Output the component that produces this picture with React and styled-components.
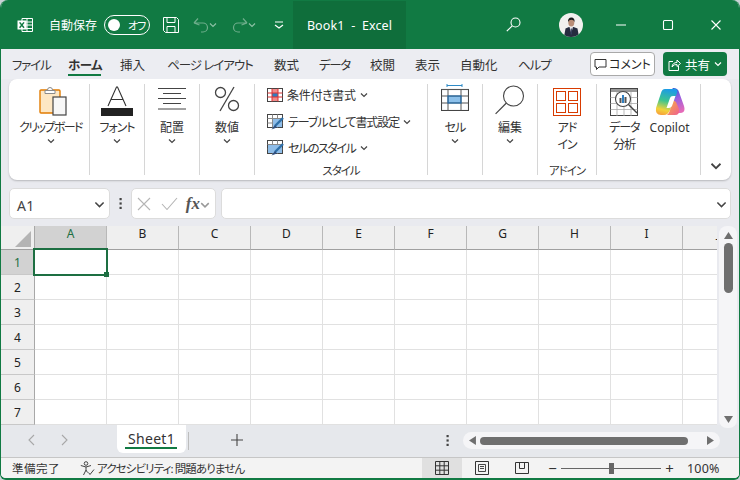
import React from "react";
import styled, { createGlobalStyle } from "styled-components";

const GREEN = "#117a43";
const FONT = `"Noto Sans", "Noto Sans CJK JP", sans-serif`;

const GlobalStyle = createGlobalStyle`
  html, body {
    margin: 0;
    padding: 0;
    background: #c9d3d6;
  }
  * {
    box-sizing: border-box;
  }
`;

const Window = styled.div`
  width: 740px;
  height: 480px;
  display: flex;
  flex-direction: column;
  overflow: hidden;
  background: #e9eaef;
  border: solid ${GREEN};
  border-width: 0 1px 2px 1px;
  border-radius: 8px 8px 6px 6px;
  font-family: ${FONT};
  font-feature-settings: "palt";
  color: #262626;
`;

/* title bar */
const TitleBar = styled.div`
  height: 49px;
  flex: none;
  display: flex;
  align-items: center;
  background: ${GREEN};
  color: #fff;
  font-size: 12px;
  margin: 0 -1px;
`;

const TitleIcon = styled.svg`
  flex: none;
  display: block;
  margin-left: ${(p) => p.$left || 0}px;
`;

const AutoSaveLabel = styled.span`
  margin-left: 16px;
  width: 48px;
  flex: none;
  white-space: nowrap;
`;

const Toggle = styled.div`
  width: 46px;
  height: 20px;
  flex: none;
  margin-left: 7px;
  border: 1.5px solid #fff;
  border-radius: 10px;
  display: flex;
  align-items: center;
  padding-left: 3px;
  gap: 8px;
  font-size: 11px;
  letter-spacing: -1px;
  white-space: nowrap;
`;

const ToggleKnob = styled.div`
  width: 12px;
  height: 12px;
  flex: none;
  border-radius: 50%;
  background: #fff;
`;

const DocTab = styled.div`
  width: 113px;
  height: 48px;
  flex: none;
  margin: 1px 0 0 9px;
  background: #0f6e3b;
  display: flex;
  align-items: center;
  justify-content: center;
  font-size: 12.5px;
  white-space: pre;
  letter-spacing: 0.1px;
`;

/* ribbon tabs */
const TabRow = styled.div`
  height: 30px;
  flex: none;
  display: flex;
  align-items: center;
  padding-left: 11px;
  background: #ecedf2;
  position: relative;
`;

const TabLabel = styled.div`
  width: ${(p) => p.$width}px;
  flex: none;
  height: 30px;
  line-height: 33px;
  font-size: 12.5px;
  white-space: nowrap;
  position: relative;
  font-weight: ${(p) => (p.$active ? 700 : 400)};
  letter-spacing: ${(p) => p.$spacing || 0}px;
  color: #333;
  &::after {
    content: "";
    display: ${(p) => (p.$active ? "block" : "none")};
    position: absolute;
    left: 0;
    top: 25px;
    width: 33px;
    height: 2px;
    background: ${GREEN};
  }
`;

const CommentButton = styled.div`
  width: 65px;
  height: 24px;
  flex: none;
  margin-left: 39px;
  display: flex;
  align-items: center;
  justify-content: center;
  gap: 2px;
  background: #fff;
  border: 1px solid #a9a9a9;
  border-radius: 4px;
  font-size: 12px;
  white-space: nowrap;
`;

const ShareButton = styled.div`
  width: 64px;
  height: 24px;
  flex: none;
  margin-left: 8px;
  display: flex;
  align-items: center;
  justify-content: center;
  gap: 4px;
  background: ${GREEN};
  color: #fff;
  border-radius: 4px;
  font-size: 12.5px;
  white-space: nowrap;
`;

/* ribbon card */
const Ribbon = styled.div`
  height: 101px;
  margin: 0 8px;
  flex: none;
  display: flex;
  padding: 5px 0 5px;
  background: #fff;
  border-radius: 8px;
  box-shadow: 0 1px 2px rgba(0, 0, 0, 0.22);
`;

const Group = styled.div`
  width: ${(p) => p.$width}px;
  flex: none;
  display: flex;
  flex-direction: column;
  align-items: ${(p) => p.$align || "center"};
  padding-left: ${(p) => p.$indent || 0}px;
  border-right: ${(p) => (p.$last ? "none" : "1px solid #d6d6d6")};
  position: relative;
`;

const IconSlot = styled.div`
  height: 32px;
  display: flex;
  align-items: flex-end;
  justify-content: center;
  padding-bottom: ${(p) => p.$lift || 0}px;
  padding-left: ${(p) => p.$shift || 0}px;
`;

const BigLabel = styled.div`
  margin-top: 3px;
  font-size: 12px;
  line-height: 17px;
  text-align: center;
  white-space: pre;
  letter-spacing: ${(p) => p.$spacing || 0}px;
  color: #333;
`;

const Chevron = styled.svg`
  display: block;
  flex: none;
  margin-top: ${(p) => p.$top || 0}px;
`;

const GroupName = styled.div`
  position: absolute;
  left: 0;
  right: 0;
  bottom: -3px;
  text-align: center;
  font-size: 11.5px;
  line-height: 15px;
  letter-spacing: -1px;
  color: #333;
`;

const ButtonPair = styled.div`
  display: flex;
  gap: 10px;
  padding-left: 12px;
  width: 100%;
`;

const PairColumn = styled.div`
  display: flex;
  flex-direction: column;
  align-items: center;
  flex: none;
`;

const StyleList = styled.div`
  display: flex;
  flex-direction: column;
  margin-top: -2px;
  padding: 0 0 0 12px;
  width: 100%;
`;

const StyleRow = styled.div`
  height: 26.5px;
  display: flex;
  align-items: center;
  gap: 4px;
  font-size: 12px;
  white-space: nowrap;
  color: #333;
`;

const StyleText = styled.span`
  letter-spacing: ${(p) => p.$spacing || 0}px;
`;

const CollapseSlot = styled.div`
  position: absolute;
  right: 9px;
  bottom: 3px;
`;

/* formula bar */
const FormulaBar = styled.div`
  height: 31px;
  flex: none;
  margin: 8px 8px 7px;
  display: flex;
  align-items: stretch;
`;

const FieldBox = styled.div`
  width: ${(p) => (p.$grow ? "auto" : `${p.$width}px`)};
  flex: ${(p) => (p.$grow ? 1 : "none")};
  display: flex;
  align-items: center;
  justify-content: ${(p) => p.$justify || "flex-start"};
  margin-left: ${(p) => p.$left || 0}px;
  background: #fff;
  border: 1px solid #dcdcdc;
  border-radius: 5px;
  padding: 1px ${(p) => p.$pad ?? 4}px 0;
`;

const NameText = styled.span`
  font-size: 14px;
  color: #444;
  margin-left: 3px;
  padding-top: 2px;
  letter-spacing: 0.4px;
  flex: 1;
`;

const DotsSlot = styled.div`
  width: 21px;
  flex: none;
  display: flex;
  align-items: center;
  justify-content: center;
`;

const FxText = styled.span`
  font-family: "Liberation Serif", serif;
  font-style: italic;
  font-weight: 700;
  font-size: 17px;
  color: #555;
  margin-left: 8px;
`;

/* sheet grid */
const GridArea = styled.div`
  flex: none;
  height: 199px;
  display: flex;
`;

const SheetGrid = styled.div`
  width: 716px;
  flex: none;
  position: relative;
  overflow: hidden;
  display: grid;
  grid-template-columns: 34px repeat(10, 72px);
  grid-template-rows: 24px repeat(7, 25px);
  background: #fff;
`;

const Corner = styled.div`
  background: #efefef;
  border-right: 1px solid #a8a8a8;
  border-bottom: 1px solid #a0a0a0;
  display: flex;
  align-items: flex-end;
  justify-content: flex-end;
  padding: 0 3px 2px 0;
`;

const ColHead = styled.div`
  background: ${(p) => (p.$selected ? "#d2d2d2" : "#efefef")};
  color: ${(p) => (p.$selected ? "#1d6f42" : "#222")};
  border-right: 1px solid #b8b8b8;
  border-bottom: 1px solid #a0a0a0;
  font-size: 12px;
  line-height: 15px;
  text-align: center;
`;

const RowHead = styled.div`
  background: ${(p) => (p.$selected ? "#d2d2d2" : "#efefef")};
  color: ${(p) => (p.$selected ? "#1d6f42" : "#222")};
  border-right: 1px solid #a8a8a8;
  border-bottom: 1px solid #c8c8c8;
  font-size: 12px;
  line-height: 26px;
  text-align: center;
`;

const Cell = styled.div`
  border-right: 1px solid #e1e1e1;
  border-bottom: 1px solid #e1e1e1;
`;

const Selection = styled.div`
  position: absolute;
  left: 32px;
  top: 22px;
  width: 75px;
  height: 28px;
  border: 2px solid #1d6f42;
  &::after {
    content: "";
    position: absolute;
    right: -3px;
    bottom: -3px;
    width: 5px;
    height: 5px;
    background: #1d6f42;
  }
`;

const VScroll = styled.div`
  width: 18px;
  flex: none;
  margin: 0 0 -3px 2px;
  display: flex;
  flex-direction: column;
  align-items: center;
  background: #f5f5f7;
  border-radius: 8px;
  padding: 5px 0 4px;
  position: relative;
`;

const VThumb = styled.div`
  width: 9px;
  height: 50px;
  margin-top: 3px;
  border-radius: 5px;
  background: #6f6f6f;
`;

const Spacer = styled.div`
  flex: 1;
`;

/* sheet tabs */
const SheetBar = styled.div`
  height: 33px;
  flex: none;
  display: flex;
  align-items: flex-start;
  background: #e6e8ec;
  border-bottom: 1px solid #c6c6c6;
`;

const NavArrows = styled.div`
  width: 116px;
  height: 30px;
  flex: none;
  display: flex;
  align-items: center;
  gap: 24px;
  padding-left: 26px;
`;

const SheetTab = styled.div`
  width: 69px;
  height: 28px;
  flex: none;
  background: #fff;
  border-radius: 0 0 6px 6px;
  position: relative;
  font-size: 14px;
  line-height: 27px;
  text-align: center;
  letter-spacing: 0.3px;
  color: #333;
  &::after {
    content: "";
    position: absolute;
    left: 8px;
    right: 9px;
    bottom: 4px;
    height: 2px;
    background: ${GREEN};
  }
`;

const TabDivider = styled.div`
  width: 1px;
  height: 18px;
  flex: none;
  margin: 7px 0 0 2px;
  background: #bdbdbd;
`;

const AddSheet = styled.div`
  width: 95px;
  height: 30px;
  flex: none;
  display: flex;
  align-items: center;
  justify-content: center;
`;

const BarDots = styled.div`
  width: 179px;
  height: 30px;
  flex: none;
  display: flex;
  align-items: center;
  justify-content: flex-end;
  padding-right: 14px;
`;

const HScroll = styled.div`
  width: 257px;
  height: 17px;
  flex: none;
  margin-top: 7px;
  display: flex;
  align-items: center;
  padding: 0 5px;
  background: #f5f5f7;
  border-radius: 9px;
`;

const HThumb = styled.div`
  width: 209px;
  height: 8px;
  margin-left: 3px;
  margin-right: 18px;
  border-radius: 4px;
  background: #6f6f6f;
`;

/* status bar */
const StatusBar = styled.div`
  flex: 1;
  display: flex;
  align-items: stretch;
  background: #f3f3f3;
  font-size: 11.5px;
  color: #333;
  white-space: nowrap;
`;

const StatusText = styled.div`
  display: flex;
  flex: none;
  align-items: center;
  gap: 2px;
  margin-left: ${(p) => p.$left}px;
  width: ${(p) => p.$width}px;
  letter-spacing: ${(p) => p.$spacing || 0}px;
`;

const ViewButton = styled.div`
  width: 40px;
  flex: none;
  display: flex;
  align-items: center;
  justify-content: center;
  background: ${(p) => (p.$active ? "#e0e0e0" : "transparent")};
`;

const ZoomBox = styled.div`
  display: flex;
  flex: none;
  align-items: center;
  margin-left: 6px;
  gap: 4px;
`;

const ZoomSign = styled.span`
  width: 9px;
  text-align: center;
  font-size: 15px;
  line-height: 15px;
`;

const ZoomTrack = styled.div`
  width: 100px;
  height: 1px;
  background: #666;
  position: relative;
`;

const ZoomHandle = styled.div`
  position: absolute;
  left: 48px;
  top: -5px;
  width: 5px;
  height: 11px;
  background: #666;
`;

const ZoomValue = styled.div`
  display: flex;
  flex: none;
  align-items: center;
  margin-left: 13px;
  font-size: 12.5px;
  letter-spacing: 0.2px;
`;

/* drawings */
const ChevronDown = ({ size = 8, color = "#444", top, width = 1.2 }) => (
  <Chevron $top={top} width={size} height={size} viewBox="0 0 8 8">
    <path d="M1 2.5 L4 5.5 L7 2.5" fill="none" stroke={color} strokeWidth={width} />
  </Chevron>
);

const ExcelGlyph = () => (
  <TitleIcon $left={17} width="16" height="16" viewBox="0 0 16 16">
    <path d="M5 1.5h10.5v13H5z M5 5h10.5 M5 8h10.5 M5 11.5h10.5 M10 1.5v13" fill="none" stroke="#fff" strokeWidth="1" />
    <rect x="0.5" y="3.5" width="9" height="9" fill="#fff" />
    <path d="M2.6 5.4 L7 10.8 M7 5.4 L2.6 10.8" stroke={GREEN} strokeWidth="1.5" />
  </TitleIcon>
);

const SaveGlyph = () => (
  <TitleIcon $left={13} width="16" height="16" viewBox="0 0 16 16">
    <path d="M.5 .5h13l2 2v13h-13l-2-2z M4 .5v5h8v-5 M4 15.5v-6h8v6" fill="none" stroke="#fff" strokeWidth="1" />
  </TitleIcon>
);

const UndoGlyph = ({ flip, left }) => (
  <TitleIcon $left={left} width="16" height="16" viewBox="0 0 16 16" style={flip ? { transform: "scaleX(-1)" } : undefined}>
    <path d="M1 6 L5 1.5 M1 6 L6.5 8 M1 6 H10 A4.5 4.5 0 0 1 10 15 H8" fill="none" stroke="#6fae8c" strokeWidth="1.2" />
  </TitleIcon>
);

const CustomizeGlyph = () => (
  <TitleIcon $left={18} width="10" height="10" viewBox="0 0 10 10">
    <path d="M1 2h8M1 5l4 3 4-3" fill="none" stroke="#fff" strokeWidth="1.2" />
  </TitleIcon>
);

const SearchGlyph = () => (
  <TitleIcon $left={100} width="15" height="15" viewBox="0 0 15 15">
    <circle cx="9.5" cy="5.5" r="4.5" fill="none" stroke="#fff" strokeWidth="1.1" />
    <path d="M6.2 8.8 L.8 14.2" stroke="#fff" strokeWidth="1.2" />
  </TitleIcon>
);

const AvatarGlyph = () => (
  <TitleIcon $left={38} width="24" height="24" viewBox="0 0 24 24">
    <defs>
      <clipPath id="avatarClip">
        <circle cx="12" cy="12" r="12" />
      </clipPath>
    </defs>
    <g clipPath="url(#avatarClip)">
      <rect width="24" height="24" fill="#f2f1ef" />
      <path d="M5 24 L6.5 15.5 L10 14 L14.5 14 L18.5 15.5 L20 24z" fill="#262c3f" />
      <path d="M10.5 14 L12.2 20 L14 14z" fill="#e8e8ec" />
      <path d="M11.8 15.5 h1 l.4 6 h-1.8z" fill="#343c5a" />
      <ellipse cx="12.3" cy="9.5" rx="3" ry="4" fill="#b98d76" />
      <path d="M9 9 Q8.8 4.4 12.4 4.4 Q15.8 4.4 15.6 9 Q14.8 6.8 12.4 6.8 Q10 6.8 9 9z" fill="#1b1b1d" />
    </g>
  </TitleIcon>
);

const WindowGlyph = ({ kind, left }) => (
  <TitleIcon $left={left} width="12" height="12" viewBox="0 0 12 12">
    {kind === "min" && <path d="M1 6h10" stroke="#fff" strokeWidth="1.2" />}
    {kind === "max" && <rect x="1.5" y="1.5" width="9" height="9" rx="1" fill="none" stroke="#fff" strokeWidth="1.1" />}
    {kind === "close" && <path d="M1.5 1.5 L10.5 10.5 M10.5 1.5 L1.5 10.5" stroke="#fff" strokeWidth="1.1" />}
  </TitleIcon>
);

const ClipboardIcon = () => (
  <svg width="28" height="30" viewBox="0 0 28 30">
    <rect x="1" y="4" width="20" height="23" rx="1" fill="#fde7c4" stroke="#e17b00" strokeWidth="1.4" />
    <path d="M6 4.5 h10 v3 h-10z M8.5 4 a2.5 2.5 0 0 1 5 0" fill="#fff" stroke="#8a8a8a" strokeWidth="1" />
    <rect x="14" y="11" width="13" height="18" fill="#f7f7f7" stroke="#444" strokeWidth="1.2" />
  </svg>
);

const FontIcon = () => (
  <svg width="32" height="30" viewBox="0 0 32 30">
    <path d="M7 20 L15.5 1 h1 L25 20 M10 13.5 h12" fill="none" stroke="#333" strokeWidth="1.1" />
    <rect y="22" width="32" height="8" fill="#222" />
  </svg>
);

const AlignIcon = () => (
  <svg width="28" height="22" viewBox="0 0 28 22">
    <path d="M0 .5h28 M5 5.500h18 M0 10.500h28 M5 15.500h18 M0 21h28" stroke="#444" strokeWidth="1" />
  </svg>
);

const PercentIcon = () => (
  <svg width="26" height="26" viewBox="0 0 26 26">
    <circle cx="6.5" cy="6.5" r="5" fill="none" stroke="#444" strokeWidth="1.3" />
    <circle cx="19.5" cy="19.5" r="5" fill="none" stroke="#444" strokeWidth="1.3" />
    <path d="M20 1 L6 25" stroke="#444" strokeWidth="1.3" />
  </svg>
);

const CondFormatIcon = () => (
  <svg width="16" height="14" viewBox="0 0 16 14">
    <rect x=".5" y=".5" width="15" height="13" fill="#fff" stroke="#444" />
    <rect x="5" y="1" width="6" height="4" fill="#f08a8a" />
    <rect x="5" y="9" width="6" height="4" fill="#f08a8a" />
    <rect x="5" y="5" width="6" height="4" fill="#2f7fc1" />
    <path d="M5 .5v13 M11 .5v13 M.5 5h15 M.5 9h15" stroke="#d33" strokeWidth="1" />
  </svg>
);

const TableFormatIcon = ({ shade }) => (
  <svg width="17" height="16" viewBox="0 0 17 16">
    <rect x=".5" y=".5" width="15" height="13" fill="#fff" stroke="#444" />
    <path d="M5.5 .5v13 M10.5 .5v13 M.5 4.5h15 M.5 9h15" stroke="#888" />
    <rect x={shade ? 1 : 6} y="5" width={shade ? 14 : 9} height="8" fill="#8fbde8" />
    <path d="M16 4 L8 12" stroke="#2f6fa8" strokeWidth="2.4" />
    <path d="M8 11 L4.5 15.5 L10 13.5z" fill="#2f4f7f" />
  </svg>
);

const CellsIcon = () => (
  <svg width="28" height="27" viewBox="0 0 28 27">
    <path d="M6 1.5h15 M6 0v3 M21 0v3" stroke="#2f8ac6" strokeWidth="1" />
    <rect x="7" y="12" width="13" height="7" fill="#8cc0ea" />
    <rect x=".5" y="5.5" width="27" height="21" fill="none" stroke="#444" strokeWidth="1.1" />
    <path d="M.5 5.5h27 M.5 12h27 M.5 19h27 M7 5.5v21 M20 5.5v21" stroke="#555" strokeWidth="1" />
    <rect x="7" y="12" width="13" height="7" fill="none" stroke="#1e6db0" strokeWidth="1.1" />
  </svg>
);

const EditSearchIcon = () => (
  <svg width="30" height="30" viewBox="0 0 30 30">
    <circle cx="18.5" cy="11" r="10" fill="none" stroke="#444" strokeWidth="1.1" />
    <path d="M11.4 18 L.6 28.8" stroke="#444" strokeWidth="1.2" />
  </svg>
);

const AddinIcon = () => (
  <svg width="28" height="28" viewBox="0 0 28 28">
    <rect x=".5" y=".5" width="27" height="27" fill="#fff" stroke="#d83b01" />
    <rect x="3.5" y="3.5" width="9" height="9" fill="none" stroke="#d83b01" />
    <rect x="15.5" y="3.5" width="9" height="9" fill="none" stroke="#d83b01" />
    <rect x="3.5" y="15.5" width="9" height="9" fill="none" stroke="#d83b01" />
    <rect x="15.5" y="15.5" width="9" height="9" fill="none" stroke="#d83b01" />
  </svg>
);

const AnalyzeIcon = () => (
  <svg width="28" height="28" viewBox="0 0 28 28">
    <rect x=".5" y=".5" width="27" height="27" fill="#fff" stroke="#444" />
    <rect x="1" y="1" width="26" height="3" fill="#999" />
    <path d="M.5 9.5h27 M.5 15.5h27 M.5 21.5h27 M7 4v24 M14 4v24 M21 4v24" stroke="#aaa" strokeWidth=".8" />
    <circle cx="13" cy="11" r="7.5" fill="#fff" stroke="#444" strokeWidth="1.1" />
    <path d="M18.5 16.5 L27 25" stroke="#444" strokeWidth="1.4" />
    <rect x="9.5" y="10" width="2" height="5" fill="#555" />
    <rect x="12" y="7" width="2" height="8" fill="#2f7fc1" />
    <rect x="14.5" y="9" width="2" height="6" fill="#555" />
  </svg>
);

const CopilotIcon = () => (
  <svg width="30" height="28" viewBox="0 0 30 28">
    <defs>
      <linearGradient id="copilotLeft" x1="0.5" y1="0" x2="0.3" y2="1">
        <stop offset="0" stopColor="#1c9be6" />
        <stop offset="0.45" stopColor="#3cc58f" />
        <stop offset="0.8" stopColor="#f2d33a" />
        <stop offset="1" stopColor="#f7a23b" />
      </linearGradient>
      <linearGradient id="copilotRight" x1="0.3" y1="0" x2="0.6" y2="1">
        <stop offset="0" stopColor="#1f5fd6" />
        <stop offset="0.45" stopColor="#9a5fe0" />
        <stop offset="1" stopColor="#e56ab8" />
      </linearGradient>
      <linearGradient id="copilotBottom" x1="0" y1="0" x2="1" y2="1">
        <stop offset="0" stopColor="#f9b43d" />
        <stop offset="1" stopColor="#ee5f8f" />
      </linearGradient>
    </defs>
    <path d="M18 0 Q23 0 24 4 L29 18 Q31 25 25 25 H20 L13 6z" fill="url(#copilotRight)" />
    <path d="M10 1 H20 Q23 1 22 5 L15 22 Q13 27 9 27 H6 Q0 27 1 20 L6 5 Q7 1 10 1z" fill="url(#copilotLeft)" />
    <path d="M12 27 H20 Q25 27 24 21 L21 14 L18 12 L15 22 Q14 26 12 27z" fill="url(#copilotBottom)" />
    <path d="M15 10 Q15.500 8 18 8 H20.500 L17 18 Q16 20 14 20 H11.500z" fill="#fff" />
  </svg>
);

const CommentGlyph = () => (
  <svg width="13" height="13" viewBox="0 0 13 13">
    <path d="M1 1.5h11v7.5h-7l-2.5 2.5v-2.5h-1.500z" fill="none" stroke="#333" strokeWidth="1" />
  </svg>
);

const ShareGlyph = () => (
  <svg width="13" height="13" viewBox="0 0 13 13">
    <path d="M5 3.5H1v9h9.500V8 M4 9 Q4.500 4.500 9 4.500 V2 L12.500 5.500 L9 8.500 V6.500 Q6 6 4 9z" fill="none" stroke="#fff" strokeWidth="1" />
  </svg>
);

const CornerTriangle = () => (
  <svg width="16" height="16" viewBox="0 0 16 16">
    <path d="M16 0V16H0z" fill="#b4b4b4" />
  </svg>
);

const TriangleIcon = ({ dir, size = 9 }) => {
  const paths = {
    up: "M4.500 1 L9 8 H0z",
    down: "M0 1 H9 L4.500 8z",
    left: "M8 0 V9 L1 4.500z",
    right: "M1 0 V9 L8 4.500z",
  };
  return (
    <svg width={size} height={size} viewBox="0 0 9 9">
      <path d={paths[dir]} fill="#6f6f6f" />
    </svg>
  );
};

const NavIcon = ({ flip }) => (
  <svg width="9" height="12" viewBox="0 0 9 12" style={flip ? { transform: "scaleX(-1)" } : undefined}>
    <path d="M7 1 L2 6 L7 11" fill="none" stroke="#a8a8a8" strokeWidth="1.1" />
  </svg>
);

const PlusIcon = () => (
  <svg width="12" height="12" viewBox="0 0 12 12">
    <path d="M6 0v12M0 6h12" stroke="#444" strokeWidth="1.1" />
  </svg>
);

const DotsIcon = () => (
  <svg width="3" height="11" viewBox="0 0 3 11">
    <rect x=".5" width="2.200" height="2.200" fill="#444" />
    <rect x=".5" y="4.400" width="2.200" height="2.200" fill="#444" />
    <rect x=".5" y="8.800" width="2.200" height="2.200" fill="#444" />
  </svg>
);

const CancelIcon = () => (
  <svg width="14" height="14" viewBox="0 0 14 14">
    <path d="M1 1 L13 13 M13 1 L1 13" stroke="#b5b5b5" strokeWidth="1.1" />
  </svg>
);

const ConfirmIcon = () => (
  <svg width="17" height="14" viewBox="0 0 17 14">
    <path d="M1 7 L6 12.500 L16 1" fill="none" stroke="#b5b5b5" strokeWidth="1.1" />
  </svg>
);

const AccessIcon = () => (
  <svg width="15" height="15" viewBox="0 0 15 15">
    <circle cx="6" cy="2.500" r="1.800" fill="none" stroke="#444" strokeWidth="1" />
    <path d="M.8 4.500 L6 6 L11 4.500 M6 6 V9 L3.500 14 M6 9 L7.500 11.500 M8.500 11.500 L10 13.500 L14 8.500" fill="none" stroke="#444" strokeWidth="1" />
  </svg>
);

const NormalViewIcon = () => (
  <svg width="14" height="14" viewBox="0 0 14 14">
    <path d="M.5 .5h13v13h-13z M.5 4.800h13 M.5 9.200h13 M4.800 .5v13 M9.200 .5v13" fill="none" stroke="#333" strokeWidth="1" />
  </svg>
);

const PageViewIcon = () => (
  <svg width="14" height="14" viewBox="0 0 14 14">
    <path d="M.5 .5h13v13h-13z" fill="none" stroke="#333" />
    <path d="M3.500 3.500h7v7h-7z M5 5.500h4 M5 7.500h4" fill="none" stroke="#333" strokeWidth=".9" />
  </svg>
);

const BreakViewIcon = () => (
  <svg width="14" height="12" viewBox="0 0 14 12">
    <path d="M.5 .5h13v11h-13z M4.500 .5v6h5v-6" fill="none" stroke="#333" />
  </svg>
);

const tabs = [
  { label: "ファイル", width: 56, spacing: -1.2 },
  { label: "ホーム", width: 52, active: true, spacing: -0.6 },
  { label: "挿入", width: 47 },
  { label: "ページ レイアウト", width: 107, spacing: -1 },
  { label: "数式", width: 45 },
  { label: "データ", width: 51, spacing: -1.3 },
  { label: "校閲", width: 45 },
  { label: "表示", width: 45 },
  { label: "自動化", width: 58 },
  { label: "ヘルプ", width: 33, spacing: -1 },
];

const columns = ["A", "B", "C", "D", "E", "F", "G", "H", "I", "J"];
const rows = [1, 2, 3, 4, 5, 6, 7];

const App = () => (
  <Window>
    <GlobalStyle />
    <TitleBar>
      <ExcelGlyph />
      <AutoSaveLabel>自動保存</AutoSaveLabel>
      <Toggle>
        <ToggleKnob />
        オフ
      </Toggle>
      <SaveGlyph />
      <UndoGlyph left={14} />
      <ChevronDown color="#8cc0a4" top={1} />
      <UndoGlyph flip left={15} />
      <ChevronDown color="#8cc0a4" top={1} />
      <CustomizeGlyph />
      <DocTab>{"Book1  -  Excel"}</DocTab>
      <SearchGlyph />
      <AvatarGlyph />
      <WindowGlyph kind="min" left={32} />
      <WindowGlyph kind="max" left={35} />
      <WindowGlyph kind="close" left={36} />
    </TitleBar>

    <TabRow>
      {tabs.map((tab) => (
        <TabLabel key={tab.label} $width={tab.width} $active={tab.active} $spacing={tab.spacing}>
          {tab.label}
        </TabLabel>
      ))}
      <CommentButton>
        <CommentGlyph />
        コメント
      </CommentButton>
      <ShareButton>
        <ShareGlyph />
        共有
        <ChevronDown color="#fff" />
      </ShareButton>
    </TabRow>

    <Ribbon>
      <Group $width={81} $indent={3}>
        <IconSlot $shift={5}>
          <ClipboardIcon />
        </IconSlot>
        <BigLabel $spacing={-1.6}>クリップボード</BigLabel>
        <ChevronDown top={1} />
      </Group>
      <Group $width={55}>
        <IconSlot>
          <FontIcon />
        </IconSlot>
        <BigLabel $spacing={-1}>フォント</BigLabel>
        <ChevronDown top={1} />
      </Group>
      <Group $width={55}>
        <IconSlot $lift={6}>
          <AlignIcon />
        </IconSlot>
        <BigLabel>配置</BigLabel>
        <ChevronDown top={1} />
      </Group>
      <Group $width={55}>
        <IconSlot $lift={4}>
          <PercentIcon />
        </IconSlot>
        <BigLabel>数値</BigLabel>
        <ChevronDown top={1} />
      </Group>
      <Group $width={173} $align="flex-start">
        <StyleList>
          <StyleRow>
            <CondFormatIcon />
            <StyleText $spacing={-0.3}>条件付き書式</StyleText>
            <ChevronDown />
          </StyleRow>
          <StyleRow>
            <TableFormatIcon />
            <StyleText $spacing={-1.1}>テーブルとして書式設定</StyleText>
            <ChevronDown />
          </StyleRow>
          <StyleRow>
            <TableFormatIcon shade />
            <StyleText $spacing={-1.4}>セルのスタイル</StyleText>
            <ChevronDown />
          </StyleRow>
        </StyleList>
        <GroupName>スタイル</GroupName>
      </Group>
      <Group $width={55}>
        <IconSlot $lift={5}>
          <CellsIcon />
        </IconSlot>
        <BigLabel $spacing={-1}>セル</BigLabel>
        <ChevronDown top={1} />
      </Group>
      <Group $width={55}>
        <IconSlot $lift={1}>
          <EditSearchIcon />
        </IconSlot>
        <BigLabel>編集</BigLabel>
        <ChevronDown top={1} />
      </Group>
      <Group $width={59}>
        <IconSlot>
          <AddinIcon />
        </IconSlot>
        <BigLabel $spacing={-1}>{"アド\nイン"}</BigLabel>
        <GroupName>アドイン</GroupName>
      </Group>
      <Group $width={104}>
        <ButtonPair>
          <PairColumn>
            <IconSlot>
              <AnalyzeIcon />
            </IconSlot>
            <BigLabel $spacing={-1}>{"データ\n分析"}</BigLabel>
          </PairColumn>
          <PairColumn>
            <IconSlot>
              <CopilotIcon />
            </IconSlot>
            <BigLabel>Copilot</BigLabel>
          </PairColumn>
        </ButtonPair>
      </Group>
      <Group $width={30} $last>
        <CollapseSlot>
          <ChevronDown size={12} />
        </CollapseSlot>
      </Group>
    </Ribbon>

    <FormulaBar>
      <FieldBox $width={101}>
        <NameText>A1</NameText>
        <ChevronDown size={11} width={1.1} />
      </FieldBox>
      <DotsSlot>
        <DotsIcon />
      </DotsSlot>
      <FieldBox $width={85} $pad={5}>
        <CancelIcon />
        <Spacer />
        <ConfirmIcon />
        <FxText>fx</FxText>
        <ChevronDown size={10} color="#999" top={1} />
      </FieldBox>
      <FieldBox $grow $left={5} $justify="flex-end" $pad={3}>
        <ChevronDown size={11} width={1.1} />
      </FieldBox>
    </FormulaBar>

    <GridArea>
      <SheetGrid>
        <Corner>
          <CornerTriangle />
        </Corner>
        {columns.map((col, i) => (
          <ColHead key={col} $selected={i === 0}>
            {col}
          </ColHead>
        ))}
        {rows.map((row) => (
          <React.Fragment key={row}>
            <RowHead $selected={row === 1}>{row}</RowHead>
            {columns.map((col) => (
              <Cell key={col} />
            ))}
          </React.Fragment>
        ))}
        <Selection />
      </SheetGrid>
      <VScroll>
        <TriangleIcon dir="up" />
        <VThumb />
        <Spacer />
        <TriangleIcon dir="down" />
      </VScroll>
    </GridArea>

    <SheetBar>
      <NavArrows>
        <NavIcon />
        <NavIcon flip />
      </NavArrows>
      <SheetTab>Sheet1</SheetTab>
      <TabDivider />
      <AddSheet>
        <PlusIcon />
      </AddSheet>
      <BarDots>
        <DotsIcon />
      </BarDots>
      <HScroll>
        <TriangleIcon dir="left" />
        <HThumb />
        <TriangleIcon dir="right" />
      </HScroll>
    </SheetBar>

    <StatusBar>
      <StatusText $left={11} $width={68} $spacing={0.5}>
        準備完了
      </StatusText>
      <StatusText $left={0} $width={342} $spacing={-0.9}>
        <AccessIcon />
        アクセシビリティ: 問題ありません
      </StatusText>
      <ViewButton $active>
        <NormalViewIcon />
      </ViewButton>
      <ViewButton>
        <PageViewIcon />
      </ViewButton>
      <ViewButton>
        <BreakViewIcon />
      </ViewButton>
      <ZoomBox>
        <ZoomSign>−</ZoomSign>
        <ZoomTrack>
          <ZoomHandle />
        </ZoomTrack>
        <ZoomSign>+</ZoomSign>
      </ZoomBox>
      <ZoomValue>100%</ZoomValue>
    </StatusBar>
  </Window>
);

export default App;
